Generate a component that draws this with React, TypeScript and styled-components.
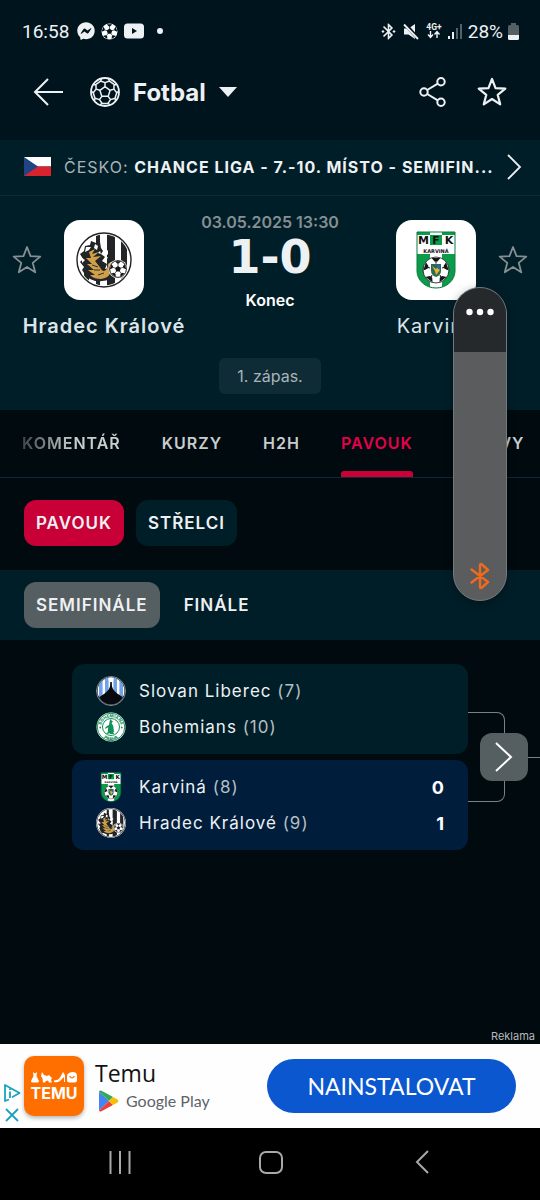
import React from "react";
import styled, { createGlobalStyle, css } from "styled-components";
import { FaFacebookMessenger } from "react-icons/fa";
import { MdBluetoothConnected } from "react-icons/md";

const color = {
  header: "#00141e",
  panel: "#001e28",
  page: "#010a0f",
  own: "#001e3c",
  line: "#0b2a34",
  accent: "#c80037",
  accentText: "#e6004b",
  grey: "#555e61",
  text: "#eef1f3",
  soft: "#c8cdcd",
  muted: "#868f93",
};

const Global = createGlobalStyle`
  *, *::before, *::after { box-sizing: border-box; }
  body { margin: 0; background: ${color.page}; }
  button, input { font: inherit; color: inherit; margin: 0; }
  svg { display: block; flex: none; }
`;

const Page = styled.div`
  position: relative;
  display: flex;
  flex-direction: column;
  min-height: 100vh;
  background: ${color.page};
  color: ${color.text};
  font-family: Inter, "Liberation Sans", sans-serif;
  font-size: 16px;
  overflow: hidden;
`;

const tracked = css`
  letter-spacing: 1px;
`;

/* ---------- status bar and app bar ---------- */

const StatusBar = styled.div`
  display: flex;
  align-items: center;
  height: 62px;
  padding: 0 21px 0 22px;
  background: ${color.header};
  font-family: Roboto, sans-serif;
  font-size: 19px;
`;

const StatusGroup = styled.div<{ $gap: number; $end?: boolean }>`
  display: flex;
  align-items: center;
  gap: ${(p) => p.$gap}px;
  margin-left: ${(p) => (p.$end ? "auto" : "8px")};
`;

const AppBar = styled.header`
  display: flex;
  align-items: center;
  height: 78px;
  padding: 0 33px 18px;
  background: ${color.header};
`;

const IconButton = styled.button`
  display: flex;
  align-items: center;
  justify-content: center;
  padding: 0;
  border: 0;
  background: none;
  cursor: pointer;
`;

const SportButton = styled(IconButton)`
  gap: 13px;
  margin: 0 auto 0 27px;
  font-size: 24px;
  font-weight: 700;
`;

const AppActions = styled.div`
  display: flex;
  gap: 30px;
`;

/* ---------- league line ---------- */

const League = styled.a`
  display: flex;
  align-items: center;
  gap: 13px;
  height: 56px;
  padding: 0 18px 2px 24px;
  background: ${color.panel};
  border-bottom: 1px solid ${color.line};
  color: ${color.text};
  text-decoration: none;
`;

const LeagueName = styled.span`
  flex: 1;
  min-width: 0;
  white-space: nowrap;
  overflow: hidden;
  ${tracked}
  color: #a9b4b9;
`;

const Strong = styled.strong`
  font-weight: 700;
  color: ${color.text};
`;

/* ---------- match header ---------- */

const MatchHeader = styled.section`
  display: flex;
  flex-direction: column;
  align-items: center;
  gap: 18px;
  padding: 0 12px 16px;
  background: ${color.panel};
`;

const Versus = styled.div`
  display: flex;
  width: 100%;
`;

const Team = styled.div`
  flex: 1;
  display: grid;
  grid-template-columns: 30px 1fr 30px;
  align-items: center;
  justify-items: center;
  padding-top: 24px;
`;

const CrestTile = styled.div`
  grid-column: 2;
  grid-row: 1;
  display: flex;
  align-items: center;
  justify-content: center;
  width: 80px;
  height: 80px;
  border-radius: 16px;
  background: #fff;
`;

const TeamStar = styled(IconButton)<{ $away?: boolean }>`
  grid-column: ${(p) => (p.$away ? 3 : 1)};
  grid-row: 1;
  color: ${color.muted};
`;

const TeamName = styled.div<{ $winner?: boolean }>`
  grid-column: 1 / -1;
  margin-top: 12px;
  font-size: 20px;
  line-height: 28px;
  font-weight: ${(p) => (p.$winner ? 600 : 400)};
  color: #dde4e8;
  white-space: nowrap;
  ${tracked}
`;

const Result = styled.div`
  display: flex;
  flex-direction: column;
  align-items: center;
  width: 148px;
  padding-top: 16px;
  line-height: 20px;
`;

const Kickoff = styled.time`
  color: ${color.muted};
  font-weight: 600;
  white-space: nowrap;
`;

const Score = styled.div`
  font-family: "DejaVu Sans", sans-serif;
  font-size: 46px;
  font-weight: 700;
  line-height: 50px;
`;

const Phase = styled.div`
  margin-top: 8px;
  font-weight: 600;
  color: #fff;
`;

const LegButton = styled.button`
  height: 36px;
  padding: 0 18px;
  border: 0;
  border-radius: 6px;
  background: #0f2c36;
  color: #a9b4b9;
  cursor: pointer;
`;

/* ---------- tabs ---------- */

const Tabs = styled.nav`
  display: flex;
  gap: 41px;
  height: 68px;
  padding-left: 22px;
  border-bottom: 1px solid ${color.line};
  white-space: nowrap;
  overflow: hidden;
`;

const Tab = styled.a<{ $active?: boolean; $fading?: boolean }>`
  display: grid;
  grid-template-rows: 1fr 6px;
  align-items: center;
  padding-top: 5px;
  font-weight: 600;
  text-decoration: none;
  ${tracked}
  color: ${(p) => (p.$active ? color.accentText : color.soft)};
  &::after {
    content: "";
    height: 6px;
    border-radius: 3px 3px 0 0;
    background: ${(p) => (p.$active ? color.accent : "transparent")};
  }
  ${(p) => p.$fading && css`
    mask-image: linear-gradient(to right, rgba(0, 0, 0, 0.3), #000 50%);
  `}
`;

const PillRow = styled.div<{ $band?: boolean }>`
  display: flex;
  gap: 12px;
  padding: ${(p) => (p.$band ? "12px 24px" : "22px 24px 24px")};
  background: ${(p) => (p.$band ? color.panel : "transparent")};
`;

const Pill = styled.button<{ $bg: string }>`
  height: 46px;
  padding: 0 12px;
  border: 0;
  border-radius: 12px;
  background: ${(p) => p.$bg};
  font-size: 17px;
  font-weight: 600;
  ${tracked}
  cursor: pointer;
`;

/* ---------- bracket ---------- */

const Bracket = styled.main`
  flex: 1;
  display: flex;
  align-items: flex-start;
  padding: 24px 0 24px 72px;
`;

const Ties = styled.div`
  flex: 1;
  display: flex;
  flex-direction: column;
  gap: 6px;
`;

const Tie = styled.div<{ $own?: boolean }>`
  padding: 9px 24px;
  border-radius: 12px;
  background: ${(p) => (p.$own ? color.own : color.panel)};
`;

const TieRow = styled.div`
  display: flex;
  align-items: center;
  gap: 13px;
  height: 36px;
  font-size: 17px;
`;

const TieTeam = styled.span`
  flex: 1;
  ${tracked}
`;

const Seed = styled.span`
  color: #b4bec4;
`;

const Goals = styled.span`
  font-size: 18px;
  font-weight: 700;
  color: #fff;
`;

const Connector = styled.div`
  display: flex;
  align-items: center;
  width: 72px;
  height: 186px;
`;

const Fork = styled.span`
  width: 37px;
  height: 90px;
  border: 1px solid #7b8285;
  border-left: 0;
  border-radius: 0 8px 8px 0;
`;

const NextRound = styled(IconButton)`
  width: 48px;
  height: 48px;
  margin-left: -25px;
  border-radius: 12px;
  background: ${color.grey};
  color: #fff;
`;

const Tail = styled.span`
  flex: 1;
  height: 1px;
  background: #7b8285;
`;

/* ---------- advert ---------- */

const AdLabel = styled.div`
  padding-right: 5px;
  font-size: 11px;
  line-height: 16px;
  text-align: right;
  color: #b4b9bb;
`;

const Ad = styled.aside`
  display: flex;
  align-items: center;
  height: 84px;
  padding-right: 24px;
  background: #fefefe;
  font-family: Lato, sans-serif;
  color: #111;
`;

const AdControls = styled.div`
  display: flex;
  flex-direction: column;
  align-items: center;
  gap: 6px;
  width: 24px;
  padding-top: 34px;
`;

const AdLogo = styled.div`
  display: flex;
  flex-direction: column;
  align-items: center;
  justify-content: center;
  gap: 2px;
  width: 60px;
  height: 60px;
  border-radius: 10px;
  background: #ff6f00;
  box-shadow: 0 2px 4px rgba(0, 0, 0, 0.3);
  color: #fff;
  font-family: Inter, sans-serif;
  font-size: 16px;
  line-height: 16px;
  font-weight: 700;
`;

const AdText = styled.div`
  flex: 1;
  padding-left: 11px;
  font-family: "Open Sans", sans-serif;
  font-size: 23px;
  line-height: 30px;
`;

const Store = styled.div`
  display: flex;
  align-items: center;
  gap: 7px;
  padding-left: 3px;
  font-family: Lato, sans-serif;
  font-size: 16px;
  line-height: 26px;
  color: #5f6368;
`;

const InstallButton = styled.button`
  width: 249px;
  height: 54px;
  border: 0;
  border-radius: 27px;
  background: #0b57d0;
  color: #fff;
  font-size: 23px;
  cursor: pointer;
`;

/* ---------- system navigation ---------- */

const SystemNav = styled.nav`
  display: grid;
  grid-template-columns: repeat(3, 1fr);
  align-items: center;
  height: 72px;
  padding: 0 42px 4px 44px;
  background: #000;
  color: #a8a8a8;
`;

/* ---------- volume panel ---------- */

const VolumePanel = styled.div`
  position: absolute;
  top: 287px;
  right: 33px;
  display: flex;
  flex-direction: column;
  width: 54px;
  height: 314px;
  border: 1px solid #74797b;
  border-radius: 27px;
  background: #5b5c5d;
  box-shadow: 0 2px 10px rgba(0, 0, 0, 0.3);
  overflow: hidden;
`;

const MoreButton = styled(IconButton)`
  height: 64px;
  padding-bottom: 16px;
  background: #25292c;
  color: #fff;
`;

const VolumeInput = styled.input`
  flex: 1;
  min-height: 0;
  width: 100%;
  appearance: none;
  background: transparent;
  writing-mode: vertical-lr;
  direction: rtl;
  &::-webkit-slider-thumb { appearance: none; width: 1px; height: 1px; }
`;

const VolumeIcon = styled.label`
  display: flex;
  justify-content: center;
  height: 38px;
  color: #ef6a1c;
`;

/* ---------- drawings ---------- */

const polar = (cx: number, cy: number, r: number, deg: number) => {
  const a = ((deg - 90) * Math.PI) / 180;
  return `${(cx + r * Math.cos(a)).toFixed(2)} ${(cy + r * Math.sin(a)).toFixed(2)}`;
};

const ring = [0, 72, 144, 216, 288];

const pentagon = (cx: number, cy: number, r: number, turn = 0) =>
  "M" + ring.map((a) => polar(cx, cy, r, a + turn)).join("L") + "Z";

const starPath = "M" + ring
  .map((a) => `${polar(15, 16, 14, a)}L${polar(15, 16, 6, a + 36)}`)
  .join("L") + "Z";

const Star = ({ width = 2 }: { width?: number }) => (
  <svg width="30" height="30" viewBox="0 0 30 30" fill="none" stroke="currentColor" strokeWidth={width} strokeLinejoin="round">
    <path d={starPath} />
  </svg>
);

const seams = ring
  .map((a) =>
    `M${polar(15, 15, 5.4, a)}L${polar(15, 15, 9.4, a)}` +
    `M${polar(15, 15, 13.8, a - 14)}L${polar(15, 15, 11.8, a - 22)}L${polar(15, 15, 9.4, a)}` +
    `L${polar(15, 15, 11.8, a + 22)}L${polar(15, 15, 13.8, a + 14)}` +
    `M${polar(15, 15, 11.8, a + 22)}L${polar(15, 15, 11.8, a + 50)}`)
  .join("");

const BallOutline = () => (
  <svg width="30" height="30" viewBox="0 0 30 30" fill="none" stroke="currentColor" strokeWidth="1.5" strokeLinejoin="round">
    <circle cx="15" cy="15" r="14" strokeWidth="1.8" />
    <path d={pentagon(15, 15, 5.4) + seams} />
  </svg>
);

const rimPatches = (cx: number, cy: number, r: number) =>
  ring
    .map((a) =>
      `M${polar(cx, cy, r * 0.98, a - 20)}L${polar(cx, cy, r * 0.66, a - 10)}L${polar(cx, cy, r * 0.66, a + 10)}` +
      `L${polar(cx, cy, r * 0.98, a + 20)}Z`)
    .join("");

const Ball = ({ cx, cy, r, dark = "#151515" }: { cx: number; cy: number; r: number; dark?: string }) => (
  <g>
    <circle cx={cx} cy={cy} r={r} fill="#fff" />
    <path d={pentagon(cx, cy, r * 0.36) + rimPatches(cx, cy, r)} fill={dark} />
    <path
      d={ring.map((a) => `M${polar(cx, cy, r * 0.3, a)}L${polar(cx, cy, r * 0.7, a)}`).join("")}
      stroke={dark}
      strokeWidth={r * 0.08}
    />
  </g>
);

const HradecCrest = ({ size }: { size: number }) => (
  <svg width={size} height={size} viewBox="0 0 56 56">
    <clipPath id={`hk${size}`}><circle cx="28" cy="28" r="25.4" /></clipPath>
    <circle cx="28" cy="28" r="28" fill="#fff" />
    <circle cx="28" cy="28" r="27" fill="#fff" stroke="#222426" strokeWidth="1.4" />
    <g clipPath={`url(#hk${size})`}>
      <path d="M20 0h4v56h-4zM31 0h8v56h-8zM45 0h6v56h-6zM8 38h5v18H8z" fill="#222426" />
      {/* mane and back outlined in black */}
      <path
        d="M9 14l5-1 1-4 5 2 4-1 1 6 2 3-2 3 4 3-3 4 5 3-2 5 4-1c2-4 5-7 12-7l1 3-6 3-3 5c-1 6-5 9-11 9-6 1-12-1-16-5l-4-6 2-3-4-5 3-3-3-5 4-3z"
        fill="#222426"
      />
      <path d="M10 15l5 0-2 3-4 2zM19 12l3 2-1 4-3-2zM6 26l3 2-3 3zM24 19l-2 2 3 1zM28 26l4-1-2 4zM29 20l3-2 0 5z" fill="#fff" />
      {/* golden mane strands */}
      <path d="M13 20l6-3-3 5 7-2-6 5 8-1-6 5 4 5c2 3 3 5 5 5 3-1 4-4 4-7 2-2 5-3 9-3l1 2-5 2-2 5c-1 6-4 8-10 9-4 0-8-1-11-4l5 0-7-5 6 0-7-6 5 0-6-6 5 0z" fill="#cfa04a" />
      <path d="M16 33l6 2M18 38l6 0M22 43l6-2" stroke="#222426" strokeWidth=".9" />
      <circle cx="42" cy="37" r="9.4" fill="#fff" />
      <Ball cx={42} cy={37} r={8.4} />
      <circle cx="42" cy="37" r="8.4" fill="none" stroke="#222426" />
    </g>
  </svg>
);

const KarvinaCrest = ({ width, height }: { width: number; height: number }) => (
  <svg width={width} height={height} viewBox="0 0 40 58">
    <clipPath id={`mfk${width}`}><path d="M1 1h38v39a19 17 0 0 1-38 0z" /></clipPath>
    <g clipPath={`url(#mfk${width})`}>
      <path d="M0 0h40v58H0z" fill="#0a9b4b" />
      <path d="M14 0h12v58H14z" fill="#fff" />
      <path d="M0 4h40v19H0z" fill="#fff" />
      <path d="M14 4h12v10H14z" fill="#0a9b4b" />
    </g>
    <path d="M1 1h38v39a19 17 0 0 1-38 0z" fill="none" stroke="#0a7a3c" strokeWidth="1" />
    <g fontFamily="DejaVu Sans, sans-serif" fontWeight="700" fill="#111" textAnchor="middle">
      <text x="7.5" y="13" fontSize="11">M</text>
      <text x="20" y="13" fontSize="11">F</text>
      <text x="33" y="13" fontSize="11">K</text>
      <text x="20" y="22" fontSize="5">KARVINÁ</text>
    </g>
    <Ball cx={20} cy={39} r={13} />
    <circle cx="20" cy="39" r="13" fill="none" stroke="#111" strokeWidth=".8" />
    <circle cx="20" cy="39" r="6.6" fill="#fff" />
    <path d="M15 33h10v7q0 4-5 6-5-2-5-6z" fill="#2c6a55" />
    <path d="M16 35l4 3 3-4 1 5-4 5-1-4z" fill="#e0b92f" />
    <path d="M21 34h3v5l-3-2z" fill="#2d66b5" />
  </svg>
);

const LiberecCrest = () => (
  <svg width="30" height="30" viewBox="0 0 30 30">
    <clipPath id="lib"><circle cx="15" cy="15" r="13.4" /></clipPath>
    <circle cx="15" cy="15" r="14.5" fill="#0a0d12" stroke="#a9adb3" strokeWidth=".8" />
    <g clipPath="url(#lib)">
      <path d="M0 0h30v30H0z" fill="#fff" />
      <path d="M3 0h3.6v30H3zM9 0h3.6v30H9zM17.4 0H21v30h-3.6zM23.4 0H27v30h-3.6z" fill="#6ea2ea" />
      <path d="M15 4l.7 5c.8 5 4.3 8 9.3 11l5 3v8H0v-8l5-3c5-3 8.5-6 9.3-11z" fill="#080a0d" />
      <path d="M12.5 1h5v3l-1 2h-3l-1-2z" fill="#fff" />
      <path d="M14.3 6h1.4v8h-1.4z" fill="#080a0d" />
    </g>
  </svg>
);

const BohemiansCrest = () => (
  <svg width="30" height="30" viewBox="0 0 60 60">
    <circle cx="30" cy="30" r="29" fill="#fff" />
    <circle cx="30" cy="30" r="27.5" fill="#fff" stroke="#12905a" strokeWidth="2" />
    <circle cx="30" cy="30" r="17" fill="none" stroke="#12905a" strokeWidth="2" />
    <path id="bohTop" d="M10.5 30a19.5 19.5 0 0 1 39 0" fill="none" />
    <path id="bohBottom" d="M4.5 31a25.5 25.5 0 0 0 51 0" fill="none" />
    <g fill="#12905a" fontFamily="Inter, sans-serif" fontWeight="800" fontSize="8.5" textAnchor="middle">
      <text><textPath href="#bohTop" startOffset="50%">BOHEMIANS</textPath></text>
      <text><textPath href="#bohBottom" startOffset="50%">PRAHA</textPath></text>
    </g>
    <circle cx="8.5" cy="31" r="1.8" fill="#12905a" />
    <circle cx="51.5" cy="31" r="1.8" fill="#12905a" />
    <path d="M28 16l2-2 1 3 3 2-3 3c2 3 4 6 4 10l1 8-2 1 3 3h-9l-1-2-4 2-3-1 4-3c-1-4 0-7 1-9l-4 1-2 2-1-2 4-4 4-2 1-6z" fill="#12905a" />
  </svg>
);

const Flag = () => (
  <svg width="27" height="19" viewBox="0 0 27 19" role="img" aria-label="Česko">
    <path d="M0 0h27v9.5H0z" fill="#fff" />
    <path d="M0 9.5h27V19H0z" fill="#d8232f" />
    <path d="M0 0l14 9.5L0 19z" fill="#1f4584" />
  </svg>
);

const Chevron = ({ w, h, stroke = 1.8 }: { w: number; h: number; stroke?: number }) => (
  <svg width={w} height={h} viewBox={`0 0 ${w} ${h}`} fill="none" stroke="currentColor" strokeWidth={stroke}>
    <path d={`M1 1L${w - 2} ${h / 2}L1 ${h - 1}`} />
  </svg>
);

const PlayLogo = () => (
  <svg width="21" height="22" viewBox="0 0 21 22">
    <path d="M1 1.5v19L11 11z" fill="#4285f4" />
    <path d="M1 1.5Q1.5-.3 3.5.8L15 7l-4 4z" fill="#34a853" />
    <path d="M1 20.5q.5 1.8 2.5.7L15 15l-4-4z" fill="#ea4335" />
    <path d="M15 7l4.5 2.6q1.6 1.4 0 2.8L15 15l-4-4z" fill="#fbbc04" />
  </svg>
);

const StatusIcons = () => (
  <>
    <StatusGroup $gap={6}>
      <FaFacebookMessenger size={18} />
      <svg width="17" height="17" viewBox="0 0 17 17"><Ball cx={8.5} cy={8.5} r={8} dark={color.header} /></svg>
      <svg width="20" height="16" viewBox="0 0 20 16">
        <rect y=".5" width="20" height="15" rx="3.5" fill="currentColor" />
        <path d="M8 5v6l5-3z" fill={color.header} />
      </svg>
      <svg width="20" height="6" viewBox="0 0 20 6"><circle cx="10" cy="3" r="3" fill="currentColor" /></svg>
    </StatusGroup>
    <StatusGroup $gap={5} $end>
      <MdBluetoothConnected size={19} />
      <svg width="17" height="17" viewBox="0 0 17 17">
        <path d="M1 5.5h4.5L12 1v15l-6.5-4.5H1z" fill="currentColor" />
        <path d="M1.5.5l14 15.5" stroke={color.header} strokeWidth="3.6" />
        <path d="M1 1.5L15 16" stroke="currentColor" strokeWidth="1.8" />
      </svg>
      <svg width="18" height="18" viewBox="0 0 18 18" fill="currentColor">
        <text x="9" y="7.5" fontSize="8.5" fontWeight="700" textAnchor="middle" fontFamily="Roboto, sans-serif">4G+</text>
        <path d="M5.5 9v6M3 12.5l2.5 3 2.5-3M12 16v-6M9.5 12.5l2.5-3 2.5 3" fill="none" stroke="currentColor" strokeWidth="1.4" />
      </svg>
      <svg width="15" height="15" viewBox="0 0 15 15" fill="currentColor">
        <path d="M0 12h2v3H0zM4 8h2v7H4z" />
        <path d="M8 4h2v11H8zM12 0h2v15h-2z" opacity=".35" />
      </svg>
      <span>28%</span>
      <svg width="11" height="17" viewBox="0 0 11 17">
        <path d="M3 0h5v2h1.5Q11 2 11 3.5V12H0V3.5Q0 2 1.5 2H3z" fill="#555f66" />
        <path d="M0 12h11v3.5q0 1.5-1.5 1.5h-8Q0 17 0 15.5z" fill="currentColor" />
      </svg>
    </StatusGroup>
  </>
);

/* ---------- data ---------- */

const tabs = ["KOMENTÁŘ", "KURZY", "H2H", "PAVOUK", "ZPRÁVY"];

const ties = [
  {
    own: false,
    rows: [
      { name: "Slovan Liberec", seed: 7, crest: <LiberecCrest /> },
      { name: "Bohemians", seed: 10, crest: <BohemiansCrest /> },
    ],
  },
  {
    own: true,
    rows: [
      { name: "Karviná", seed: 8, goals: 0, crest: <KarvinaCrest width={30} height={30} /> },
      { name: "Hradec Králové", seed: 9, goals: 1, crest: <HradecCrest size={30} /> },
    ],
  },
];

export default function App() {
  return (
    <Page>
      <Global />
      <StatusBar>
        <span>16:58</span>
        <StatusIcons />
      </StatusBar>

      <AppBar>
        <IconButton aria-label="Zpět">
          <svg width="30" height="28" viewBox="0 0 30 28" fill="none" stroke="currentColor" strokeWidth="2">
            <path d="M30 14H2M15 1L2 14l13 13" />
          </svg>
        </IconButton>
        <SportButton>
          <BallOutline />
          Fotbal
          <svg width="18" height="10" viewBox="0 0 18 10" fill="currentColor"><path d="M0 0h18L9 10z" /></svg>
        </SportButton>
        <AppActions>
          <IconButton aria-label="Sdílet">
            <svg width="28" height="30" viewBox="0 0 28 30" fill="none" stroke="currentColor" strokeWidth="2">
              <circle cx="5" cy="15" r="3.7" />
              <circle cx="22" cy="4.7" r="3.7" />
              <circle cx="22" cy="25.3" r="3.7" />
              <path d="M8.2 13L18.8 6.6M8.2 17l10.6 6.4" />
            </svg>
          </IconButton>
          <IconButton aria-label="Oblíbený zápas"><Star width={2.2} /></IconButton>
        </AppActions>
      </AppBar>

      <League href="#liga">
        <Flag />
        <LeagueName>ČESKO: <Strong>CHANCE LIGA - 7.-10. MÍSTO - SEMIFIN...</Strong></LeagueName>
        <Chevron w={15} h={26} />
      </League>

      <MatchHeader>
        <Versus>
          <Team>
            <TeamStar aria-label="Oblíbený tým Hradec Králové"><Star width={1.8} /></TeamStar>
            <CrestTile><HradecCrest size={56} /></CrestTile>
            <TeamName $winner>Hradec Králové</TeamName>
          </Team>
          <Result>
            <Kickoff>03.05.2025 13:30</Kickoff>
            <Score>1-0</Score>
            <Phase>Konec</Phase>
          </Result>
          <Team>
            <CrestTile><KarvinaCrest width={40} height={58} /></CrestTile>
            <TeamStar $away aria-label="Oblíbený tým Karviná"><Star width={1.8} /></TeamStar>
            <TeamName>Karviná</TeamName>
          </Team>
        </Versus>
        <LegButton>1. zápas.</LegButton>
      </MatchHeader>

      <Tabs>
        {tabs.map((t, i) => (
          <Tab key={t} href={`#${t.toLowerCase()}`} $active={t === "PAVOUK"} $fading={i === 0}>{t}</Tab>
        ))}
      </Tabs>

      <PillRow>
        <Pill $bg={color.accent}>PAVOUK</Pill>
        <Pill $bg={color.panel}>STŘELCI</Pill>
      </PillRow>
      <PillRow $band>
        <Pill $bg={color.grey}>SEMIFINÁLE</Pill>
        <Pill $bg="transparent">FINÁLE</Pill>
      </PillRow>

      <Bracket>
        <Ties>
          {ties.map((tie, i) => (
            <Tie key={i} $own={tie.own}>
              {tie.rows.map((r) => (
                <TieRow key={r.name}>
                  {r.crest}
                  <TieTeam>{r.name} <Seed>({r.seed})</Seed></TieTeam>
                  {"goals" in r && <Goals>{r.goals}</Goals>}
                </TieRow>
              ))}
            </Tie>
          ))}
        </Ties>
        <Connector>
          <Fork />
          <NextRound aria-label="Další kolo"><Chevron w={18} h={30} stroke={2} /></NextRound>
          <Tail />
        </Connector>
      </Bracket>

      <AdLabel>Reklama</AdLabel>
      <Ad>
        <AdControls>
          <IconButton aria-label="Informace o reklamě">
            <svg width="18" height="18" viewBox="0 0 18 18" fill="none" stroke="#17a4bd" strokeWidth="1.8" strokeLinejoin="round">
              <path d="M6 15.5L2 17V1l14.5 8L9 13.2" />
              <path d="M7 7.5v6.5M7 4.5v1.5" />
            </svg>
          </IconButton>
          <IconButton aria-label="Zavřít reklamu">
            <svg width="14" height="14" viewBox="0 0 14 14" stroke="#17a4bd" strokeWidth="1.8"><path d="M1 1l12 12M13 1L1 13" /></svg>
          </IconButton>
        </AdControls>
        <AdLogo>
          <svg width="46" height="11" viewBox="0 0 46 11" fill="#fff">
            <path d="M2 0l2 1.5L6 0l-.5 4L8 9q0 1.5-1.5 1.5h-5Q0 10.5 0 9l2.5-5z" />
            <path d="M11 0l2 3 3 1 2-1 3 3-1 2 1 2.5h-3l-1-2-2 .5-1 1.5h-2l-.5-4L10 4z" />
            <path d="M32 0l2 3v7h-1V5l-4 4q-3 2-6 1V8.5q4 0 6-3z" />
            <path d="M38 1q4-2 7 0 1 1 1 3v4q0 2.5-2.5 2.5h-5Q36 10.5 36 8V4q0-2 2-3z" />
            <path d="M38.5 4q2.5 4 5 0" fill="none" stroke="#ff6f00" strokeWidth="1.2" />
          </svg>
          TEMU
        </AdLogo>
        <AdText>
          Temu
          <Store><PlayLogo />Google Play</Store>
        </AdText>
        <InstallButton>NAINSTALOVAT</InstallButton>
      </Ad>

      <SystemNav>
        <IconButton aria-label="Poslední aplikace">
          <svg width="22" height="23" viewBox="0 0 22 23" stroke="currentColor" strokeWidth="2"><path d="M1.5 0v23M11 0v23M20.5 0v23" /></svg>
        </IconButton>
        <IconButton aria-label="Domů">
          <svg width="24" height="23" viewBox="0 0 24 23" fill="none" stroke="currentColor" strokeWidth="2"><rect x="1" y="1" width="22" height="21" rx="6" /></svg>
        </IconButton>
        <IconButton aria-label="Zpět v systému">
          <svg width="14" height="24" viewBox="0 0 14 24" fill="none" stroke="currentColor" strokeWidth="2"><path d="M13 1L2 12l11 11" /></svg>
        </IconButton>
      </SystemNav>

      <VolumePanel>
        <MoreButton aria-label="Další možnosti">
          <svg width="28" height="8" viewBox="0 0 28 8" fill="currentColor">
            <circle cx="3.5" cy="4" r="3.2" /><circle cx="14" cy="4" r="3.2" /><circle cx="24.5" cy="4" r="3.2" />
          </svg>
        </MoreButton>
        <VolumeInput id="volume" type="range" min={0} max={100} defaultValue={80} />
        <VolumeIcon htmlFor="volume" aria-label="Hlasitost Bluetooth">
          <svg width="20" height="28" viewBox="0 0 20 28" fill="none" stroke="currentColor" strokeWidth="2.4" strokeLinecap="round" strokeLinejoin="round">
            <path d="M1.5 7.5L18 20l-6 5.500q-2 1.500-2-1V3.500q0-2.500 2-1L18 8 1.500 20.500" />
          </svg>
        </VolumeIcon>
      </VolumePanel>
    </Page>
  );
}
